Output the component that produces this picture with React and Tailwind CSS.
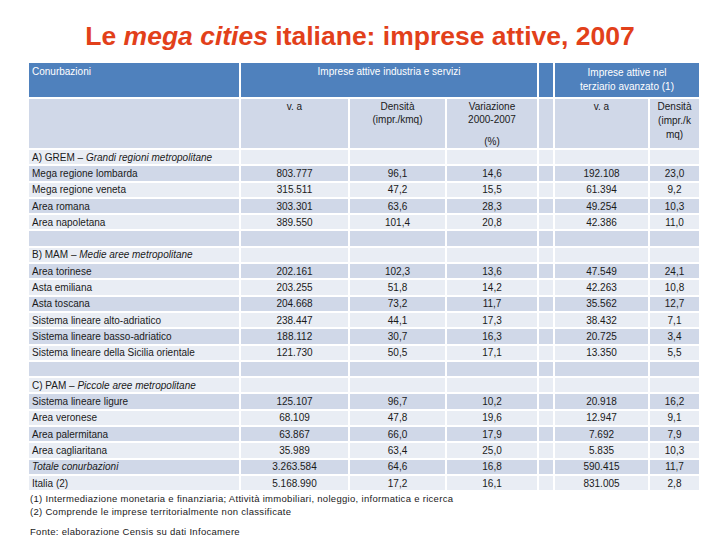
import React from "react";

const rows = [
  { label: <>A) GREM – <i>Grandi regioni metropolitane</i></>, v: [] },
  { label: "Mega regione lombarda", v: ["803.777", "96,1", "14,6", "192.108", "23,0"] },
  { label: "Mega regione veneta", v: ["315.511", "47,2", "15,5", "61.394", "9,2"] },
  { label: "Area romana", v: ["303.301", "63,6", "28,3", "49.254", "10,3"] },
  { label: "Area napoletana", v: ["389.550", "101,4", "20,8", "42.386", "11,0"] },
  { label: "", v: [] },
  { label: <>B) MAM – <i>Medie aree metropolitane</i></>, v: [] },
  { label: "Area torinese", v: ["202.161", "102,3", "13,6", "47.549", "24,1"] },
  { label: "Asta emiliana", v: ["203.255", "51,8", "14,2", "42.263", "10,8"] },
  { label: "Asta toscana", v: ["204.668", "73,2", "11,7", "35.562", "12,7"] },
  { label: "Sistema lineare alto-adriatico", v: ["238.447", "44,1", "17,3", "38.432", "7,1"] },
  { label: "Sistema lineare basso-adriatico", v: ["188.112", "30,7", "16,3", "20.725", "3,4"] },
  { label: "Sistema lineare della Sicilia orientale", v: ["121.730", "50,5", "17,1", "13.350", "5,5"] },
  { label: "", v: [] },
  { label: <>C) PAM – <i>Piccole aree metropolitane</i></>, v: [] },
  { label: "Sistema lineare ligure", v: ["125.107", "96,7", "10,2", "20.918", "16,2"] },
  { label: "Area veronese", v: ["68.109", "47,8", "19,6", "12.947", "9,1"] },
  { label: "Area palermitana", v: ["63.867", "66,0", "17,9", "7.692", "7,9"] },
  { label: "Area cagliaritana", v: ["35.989", "63,4", "25,0", "5.835", "10,3"] },
  { label: <i>Totale conurbazioni</i>, v: ["3.263.584", "64,6", "16,8", "590.415", "11,7"] },
  { label: "Italia (2)", v: ["5.168.990", "17,2", "16,1", "831.005", "2,8"] },
];

export default function App() {
  return (
    <div className="w-[720px] h-[540px] bg-white overflow-hidden font-['Liberation_Sans_Narrow','Liberation_Sans',sans-serif] text-[#1a1a1a]">
      <div className="h-[61px] flex items-center justify-center pt-[12px]">
        <h1 className="text-[26.5px] font-bold text-[#e2401a] leading-none">
          Le <i>mega cities</i> italiane: imprese attive, 2007
        </h1>
      </div>
      <table className="ml-[27px] border-separate border-spacing-[2px] table-fixed text-[10px] leading-[13px]">
        <colgroup>
          <col className="w-[210px]" />
          <col className="w-[107px]" />
          <col className="w-[95px]" />
          <col className="w-[90px]" />
          <col className="w-[14px]" />
          <col className="w-[93px]" />
          <col className="w-[49px]" />
        </colgroup>
        <thead>
          <tr className="text-white bg-transparent">
            <td className="h-[34px] p-0 bg-[#4f81bd] align-top pl-[3px] pt-[2px]">Conurbazioni</td>
            <td colSpan={3} className="h-[34px] p-0 bg-[#4f81bd] align-top text-center pt-[2px]">Imprese attive industria e servizi</td>
            <td className="h-[34px] p-0 bg-[#4f81bd]"></td>
            <td colSpan={2} className="h-[34px] p-0 bg-[#4f81bd] text-center align-middle leading-[14px]">
              Imprese attive nel<br />terziario avanzato (1)
            </td>
          </tr>
          <tr>
            <td className="h-[47px] p-0 bg-[#d0d8e8]"></td>
            <td className="h-[47px] p-0 bg-[#d0d8e8] align-top text-center pt-[1px]">v. a</td>
            <td className="h-[47px] p-0 bg-[#d0d8e8] align-top text-center pt-[1px]">Densità<br />(impr./kmq)</td>
            <td className="h-[47px] p-0 bg-[#d0d8e8] align-top text-center pt-[1px]">
              Variazione<br />2000-2007
              <div className="mt-[9px]">(%)</div>
            </td>
            <td className="h-[47px] p-0 bg-[#d0d8e8]"></td>
            <td className="h-[47px] p-0 bg-[#d0d8e8] align-top text-center pt-[1px]">v. a</td>
            <td className="h-[47px] p-0 bg-[#d0d8e8] align-top text-center pt-[1px] leading-[14px]">Densità<br />(impr./k<br />mq)</td>
          </tr>
        </thead>
        <tbody>
          {rows.map((r, i) => {
            const bg = i % 2 === 0 ? "bg-[#e9edf4]" : "bg-[#d0d8e8]";
            return (
              <tr key={i}>
                <td className={`h-[14.3px] p-0 pl-[3px] whitespace-nowrap ${bg}`}>{r.label}</td>
                <td className={`h-[14.3px] p-0 text-center ${bg}`}>{r.v[0]}</td>
                <td className={`h-[14.3px] p-0 text-center ${bg}`}>{r.v[1]}</td>
                <td className={`h-[14.3px] p-0 text-center ${bg}`}>{r.v[2]}</td>
                <td className={`h-[14.3px] p-0 ${bg}`}></td>
                <td className={`h-[14.3px] p-0 text-center ${bg}`}>{r.v[3]}</td>
                <td className={`h-[14.3px] p-0 text-center ${bg}`}>{r.v[4]}</td>
              </tr>
            );
          })}
        </tbody>
      </table>
      <div className="pl-[30px] text-[9.5px] leading-[13px] tracking-[0.3px]">
        <div>(1) Intermediazione monetaria e finanziaria; Attività immobiliari, noleggio, informatica e ricerca</div>
        <div>(2) Comprende le imprese territorialmente non classificate</div>
        <div className="mt-[7px]">Fonte: elaborazione Censis su dati Infocamere</div>
      </div>
    </div>
  );
}
